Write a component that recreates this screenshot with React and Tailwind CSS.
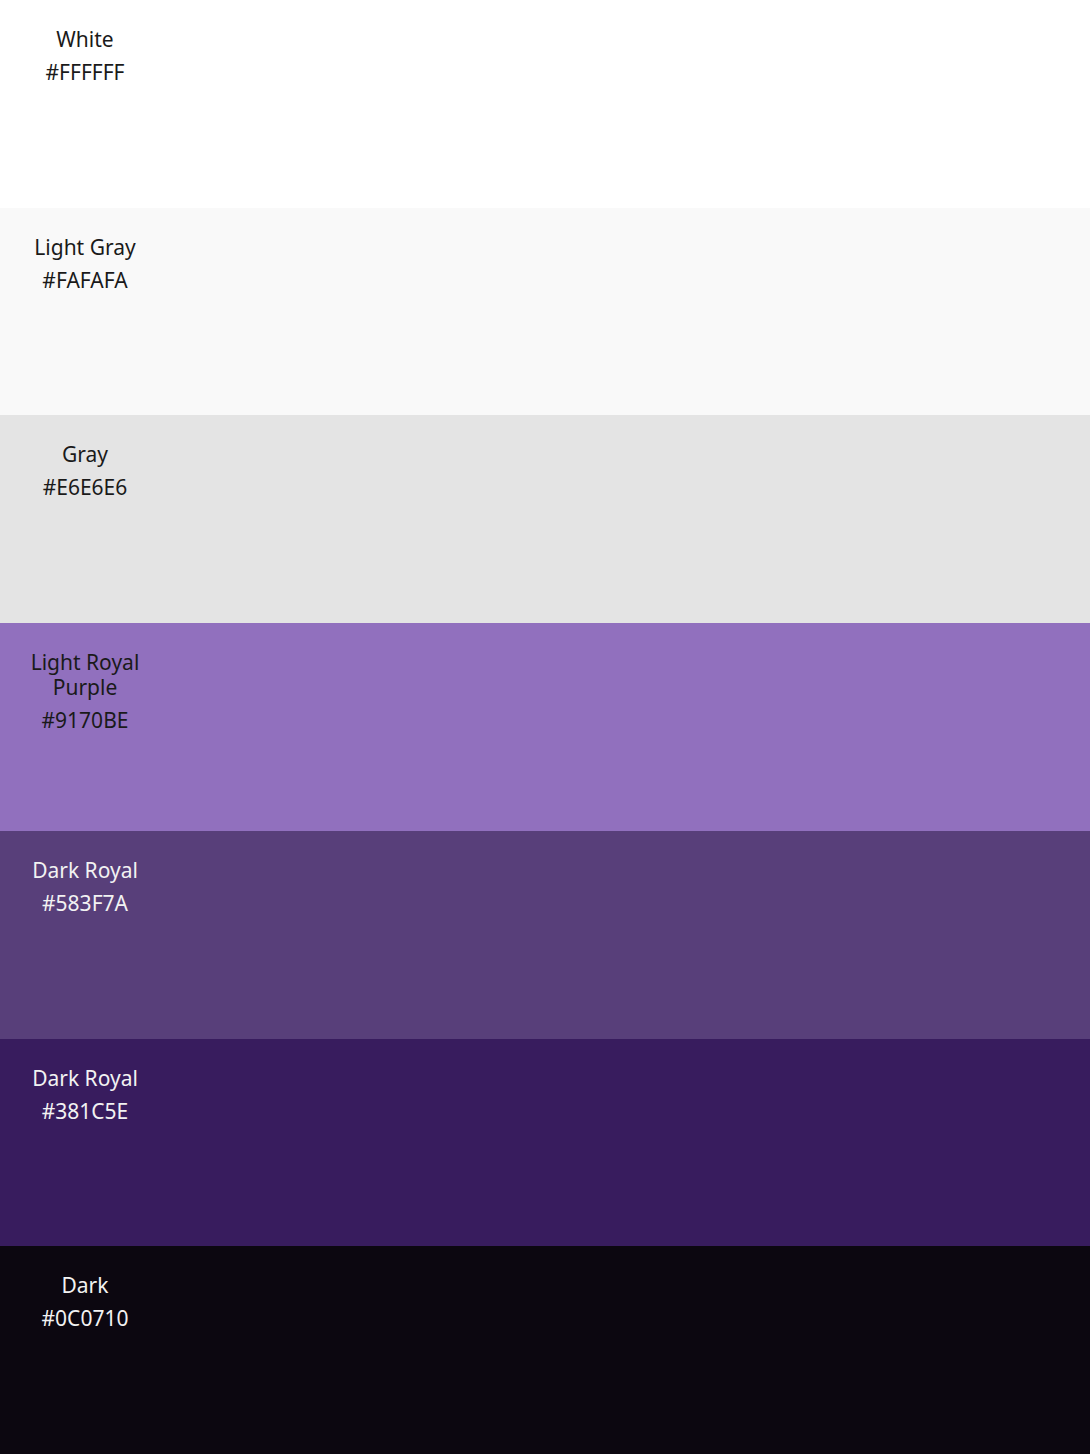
const swatches = [
  { name: "White", hex: "#FFFFFF", bg: "bg-[#ffffff]", text: "text-[#1a1a1a]" },
  { name: "Light Gray", hex: "#FAFAFA", bg: "bg-[#f9f9f9]", text: "text-[#1a1a1a]" },
  { name: "Gray", hex: "#E6E6E6", bg: "bg-[#e4e4e4]", text: "text-[#1a1a1a]" },
  { name: "Light Royal Purple", hex: "#9170BE", bg: "bg-[#9170be]", text: "text-[#1a1a1a]" },
  { name: "Dark Royal", hex: "#583F7A", bg: "bg-[#583f7a]", text: "text-[#f2f2f2]" },
  { name: "Dark Royal", hex: "#381C5E", bg: "bg-[#381c5e]", text: "text-[#f2f2f2]" },
  { name: "Dark", hex: "#0C0710", bg: "bg-[#0c0710]", text: "text-[#f2f2f2]" },
];

export default function App() {
  return (
    <div className="flex flex-col h-[1454px] w-full font-['Lato',sans-serif]">
      {swatches.map((s, i) => (
        <div key={i} className={`flex-1 ${s.bg}`}>
          <div className={`w-[170px] pt-[27px] text-center text-[21px] leading-[25px] ${s.text}`}>
            <div className="px-[30px] mb-[8px]">{s.name}</div>
            <div>{s.hex}</div>
          </div>
        </div>
      ))}
    </div>
  );
}
